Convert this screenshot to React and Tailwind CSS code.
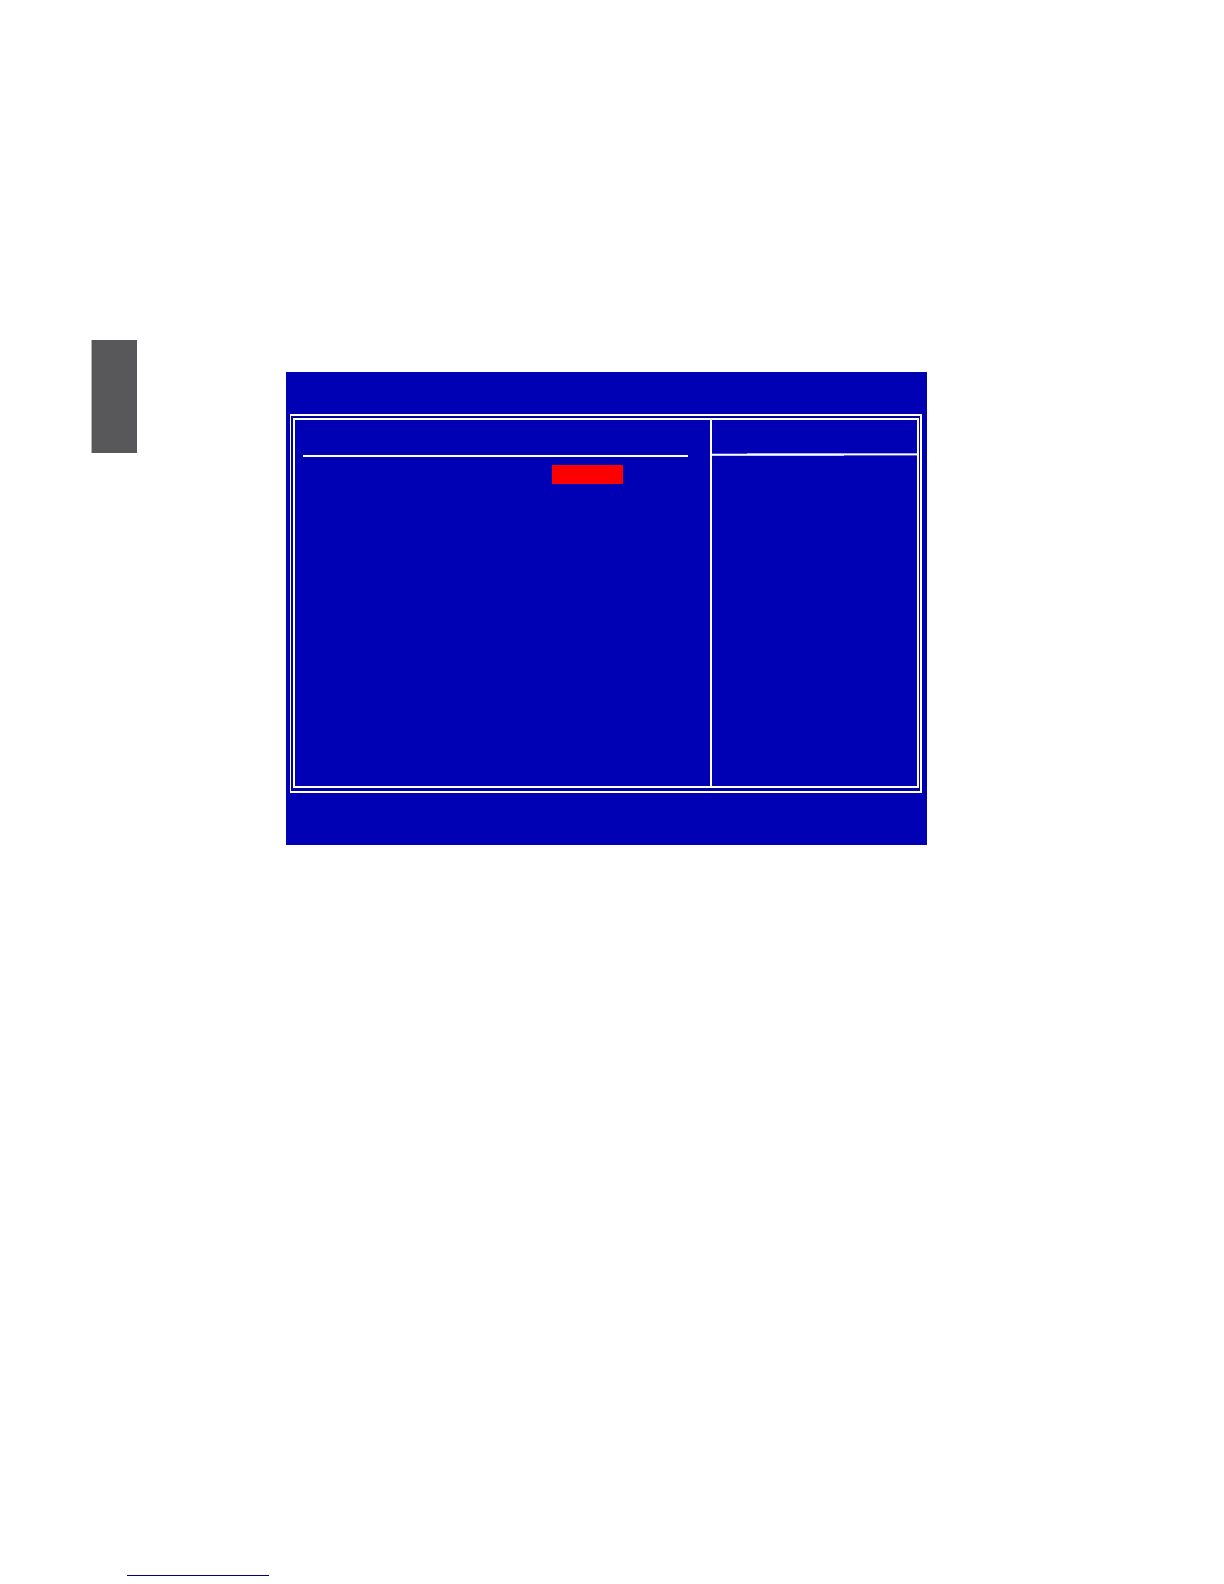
function SideTab() {
  return <aside className="ml-[91px] mt-[340px] h-[113px] w-[46px] shrink-0 border-l border-[#b4b4b5] bg-[#58585a]" />;
}

function SettingsPane() {
  return (
    <section className="flex-1 pl-2 pr-[22px] pt-[35px]">
      <div className="h-[2px] bg-white" />
      {/* Selected value */}
      <div className="ml-[249px] mt-2 h-[19px] w-[71px] bg-[#ff0000]" />
    </section>
  );
}

function HelpPane() {
  return (
    <section className="w-[207px] border-l-2 border-white pt-[33px]">
      {/* Rule that rises slightly towards the right */}
      <svg className="block h-[3px] w-full" viewBox="0 0 205 3" preserveAspectRatio="none">
        <rect x="0" y="0" width="35" height="1" fill="#4646c8" />
        <rect x="35" y="0" width="170" height="1" fill="#a8a8e6" />
        <rect x="0" y="1" width="205" height="1" fill="#ffffff" />
        <rect x="0" y="2" width="132" height="1" fill="#c8c8f0" />
        <rect x="132" y="2" width="73" height="1" fill="#6464d0" />
      </svg>
    </section>
  );
}

function BiosScreen() {
  return (
    <main className="ml-[149px] mr-[297px] mt-[372px] flex min-h-[473px] flex-1 flex-col bg-[#0000b4] pb-[52px] pl-1 pr-[5px] pt-[42px]">
      <div className="flex flex-1 flex-col border-y-2 border-l border-r-2 border-white bg-[#0000a0] pb-[3px] pl-[2px] pr-px pt-[2px]">
        <div className="flex flex-1 border-2 border-white bg-[#0000b4]">
          <SettingsPane />
          <HelpPane />
        </div>
      </div>
    </main>
  );
}

export default function App() {
  return (
    <div className="flex min-h-screen flex-col bg-white">
      <div className="flex flex-1 items-start">
        <SideTab />
        <BiosScreen />
      </div>
      <footer className="pb-2 pl-[127px]">
        <div className="h-px w-[142px] bg-[#00007c]" />
      </footer>
    </div>
  );
}
